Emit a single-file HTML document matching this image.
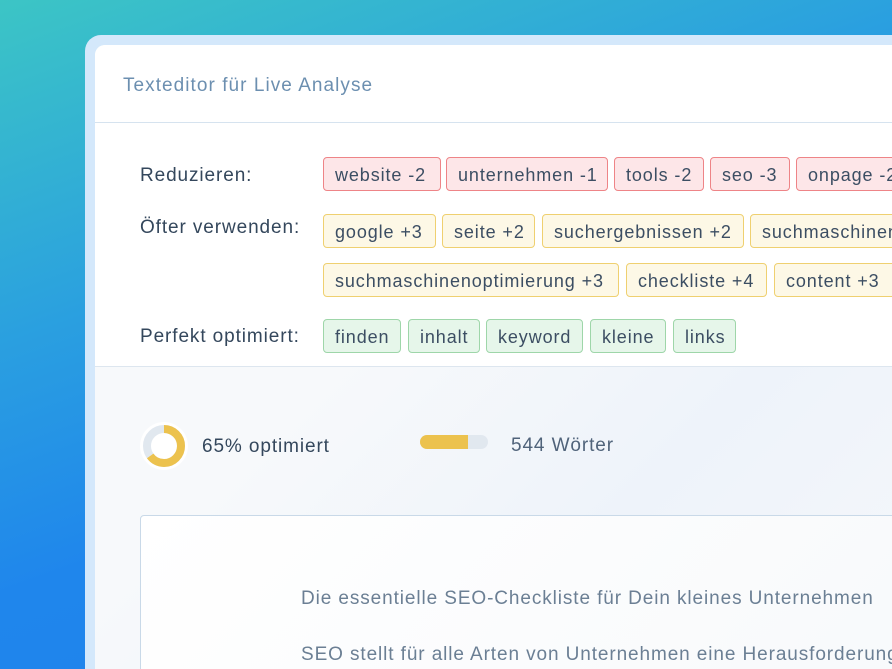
<!DOCTYPE html><html style="width:892px;height:669px;overflow:hidden"><head><meta charset="utf-8"><style>
*{margin:0;padding:0;box-sizing:border-box}
body{width:892px;height:669px;overflow:hidden;position:relative;font-family:"Liberation Sans",sans-serif;letter-spacing:0.9px;background:linear-gradient(160deg,#3cc5c5 0%,#2a9fe0 35%,#1f86ec 60%,#1e80ea 100%)}
.outer{position:absolute;left:85px;top:35px;width:807px;height:634px;border-radius:16px 0 0 0;background:#d4e8fb}
.card{position:absolute;left:95px;top:45px;width:797px;height:624px;border-radius:10px 0 0 0;background:linear-gradient(135deg,#f7f9fb 40%,#eef3fa 70%,#f5f7fb);overflow:hidden}
.head{position:absolute;left:0;top:0;width:100%;height:78px;background:#fff;border-bottom:1.5px solid #d6e3ef}
.head span{position:absolute;left:28px;top:30px;font-size:19px;color:#6c8fb0;letter-spacing:1.05px}
.tags{position:absolute;left:0;top:78px;width:100%;height:244px;background:#fff;border-bottom:1.5px solid #dde6ef}
.lbl{position:absolute;left:45px;font-size:19px;color:#34475c}
.t{position:absolute;height:34px;border-radius:4px;font-size:18px;color:#3c4e63;line-height:34px;padding-left:11px;white-space:nowrap;border:1.5px solid;overflow:hidden}
.r{background:#fde6e8;border-color:#ee8487}
.y{background:#fdf8e6;border-color:#efd070}
.g{background:#e6f6ea;border-color:#9ed6a9}
.txt{position:absolute;font-size:19px;color:#34475c}
.ed{position:absolute;left:45px;top:470px;width:800px;height:200px;border:1.5px solid #c9d9e8;border-radius:4px;background:linear-gradient(135deg,#fff,#f7f9fb)}
.p{position:absolute;left:206px;font-size:19px;color:#6b7f94;white-space:nowrap}
</style></head><body>
<div class="outer"></div>
<div class="card">
<div class="head"><span>Texteditor für Live Analyse</span></div>
<div class="tags"></div>
<div class="lbl" style="top:120px">Reduzieren:</div>
<div class="lbl" style="top:172px">Öfter verwenden:</div>
<div class="lbl" style="top:281px">Perfekt optimiert:</div>
<div class="t r" style="left:228px;top:112px;width:118px">website -2</div>
<div class="t r" style="left:351px;top:112px;width:162px">unternehmen -1</div>
<div class="t r" style="left:519px;top:112px;width:90px">tools -2</div>
<div class="t r" style="left:615px;top:112px;width:80px">seo -3</div>
<div class="t r" style="left:701px;top:112px;width:120px">onpage -2</div>
<div class="t y" style="left:228px;top:169px;width:113px">google +3</div>
<div class="t y" style="left:347px;top:169px;width:93px">seite +2</div>
<div class="t y" style="left:447px;top:169px;width:202px">suchergebnissen +2</div>
<div class="t y" style="left:655px;top:169px;width:200px">suchmaschinen</div>
<div class="t y" style="left:228px;top:218px;width:296px">suchmaschinenoptimierung +3</div>
<div class="t y" style="left:531px;top:218px;width:141px">checkliste +4</div>
<div class="t y" style="left:679px;top:218px;width:130px">content +3</div>
<div class="t g" style="left:228px;top:274px;width:78px">finden</div>
<div class="t g" style="left:313px;top:274px;width:72px">inhalt</div>
<div class="t g" style="left:391px;top:274px;width:97px">keyword</div>
<div class="t g" style="left:495px;top:274px;width:76px">kleine</div>
<div class="t g" style="left:578px;top:274px;width:63px">links</div>
<svg style="position:absolute;left:44px;top:376px" width="50" height="50" viewBox="0 0 50 50"><circle cx="25" cy="25" r="24" fill="#fff"/><circle cx="25" cy="25" r="17" fill="none" stroke="#e1e8ef" stroke-width="8"/><circle cx="25" cy="25" r="17" fill="none" stroke="#ecc24e" stroke-width="8" stroke-dasharray="69.4 107" transform="rotate(-90 25 25)"/></svg>
<div class="txt" style="left:107px;top:391px">65% optimiert</div>
<div style="position:absolute;left:325px;top:390px;width:68px;height:14px;border-radius:7px;background:#e1e8ef"><div style="width:48px;height:14px;border-radius:7px 0 0 7px;background:#ecc24e"></div></div>
<div class="txt" style="left:416px;top:390px;color:#50637a">544 Wörter</div>
<div class="ed"></div>
<div class="p" style="top:543px">Die essentielle SEO-Checkliste für Dein kleines Unternehmen</div>
<div class="p" style="top:599px">SEO stellt für alle Arten von Unternehmen eine Herausforderung</div>
</div>
</body></html>
